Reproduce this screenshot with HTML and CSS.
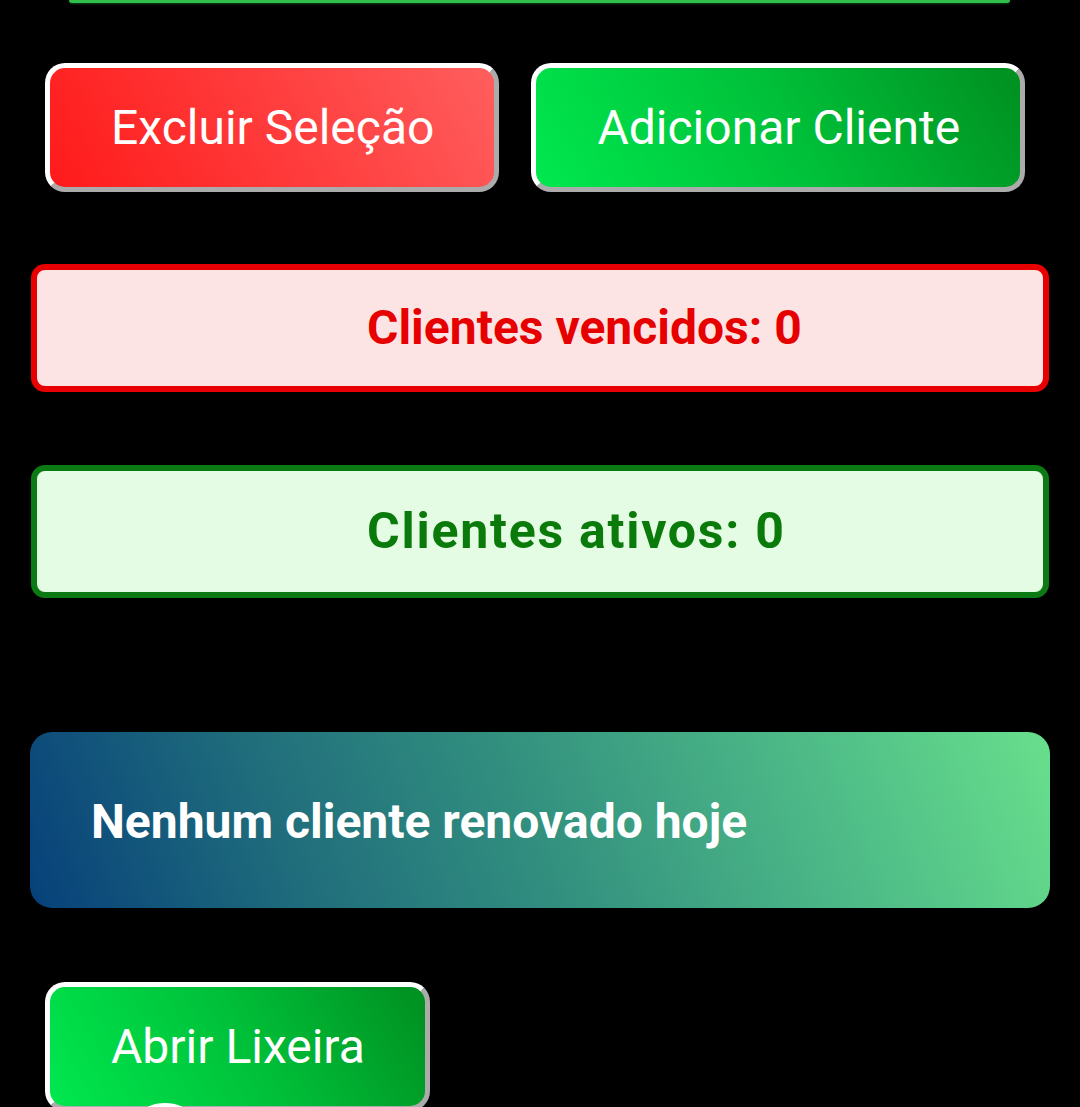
FILE: index.html
```html
<!DOCTYPE html>
<html lang="pt">
<head>
<meta charset="utf-8">
<title>Clientes</title>
<link rel="stylesheet" href="styles.css">
</head>
<body>
<div class="page">
  <div class="top-bar"></div>
  <div class="actions">
    <button class="btn btn-red">Excluir Seleção</button>
    <button class="btn btn-green">Adicionar Cliente</button>
  </div>
  <div class="status status-red">Clientes vencidos: 0</div>
  <div class="status status-green">Clientes ativos: 0</div>
  <div class="renewed">Nenhum cliente renovado hoje</div>
  <div class="actions actions-bottom">
    <button class="btn btn-green">Abrir Lixeira</button>
  </div>
  <div class="peek"></div>
</div>
</body>
</html>
```

FILE: styles.css
```css
html, body {
  margin: 0;
  padding: 0;
  background: #000;
}
body {
  font-family: Roboto, "Noto Sans", Arial, sans-serif;
  height: 1107px;
  overflow: hidden;
}
.page {
  position: relative;
  display: flex;
  flex-direction: column;
}
.top-bar {
  height: 3px;
  margin: 0 70px 0 69px;
  background: #2fbf4a;
  border-radius: 0 0 6px 6px;
  box-shadow: 0 1px 2px rgba(47, 191, 74, 0.35);
}
.actions {
  display: flex;
  gap: 32px;
  padding-left: 45px;
  margin-top: 60px;
}
.btn {
  font-family: Roboto, "Noto Sans", Arial, sans-serif;
  font-size: 48px;
  line-height: 56px;
  color: #fff;
  padding: 32px 60px 31px 61px;
  border: 5px outset #ffffff;
  border-radius: 20px;
  cursor: pointer;
}
.btn-red {
  background: linear-gradient(60deg, #ff1a1a 0%, #ff3b3b 50%, #ff5e5e 100%);
}
.btn-green {
  background: linear-gradient(60deg, #00e84f 0%, #00c23a 50%, #008f20 100%);
}
.status {
  margin: 0 31px;
  border-radius: 14px;
  font-size: 48px;
  font-weight: 700;
  line-height: 56px;
  padding-left: 330px;
}
.status-red {
  margin-top: 72px;
  border: 6px solid #e80000;
  background: #fde4e4;
  color: #e60000;
  padding-top: 30px;
  padding-bottom: 30px;
}
.status-green {
  margin-top: 73px;
  border: 6px solid #0b7a12;
  background: #e4fbe4;
  color: #0a7a0a;
  font-size: 50px;
  letter-spacing: 1.75px;
  padding-top: 32px;
  padding-bottom: 33px;
}
.renewed {
  margin: 134px 30px 0 30px;
  border-radius: 22px;
  background: linear-gradient(68deg, #07407a 0%, #1f6c7c 25%, #33917f 50%, #4cb887 75%, #68df8c 100%);
  color: #fff;
  font-size: 48px;
  font-weight: 700;
  line-height: 56px;
  padding: 62px 0 58px 61px;
}
.actions-bottom {
  margin-top: 74px;
}
.peek {
  position: absolute;
  left: 143px;
  top: 1103px;
  width: 44px;
  height: 20px;
  border-radius: 50%;
  background: #fff;
}
```
